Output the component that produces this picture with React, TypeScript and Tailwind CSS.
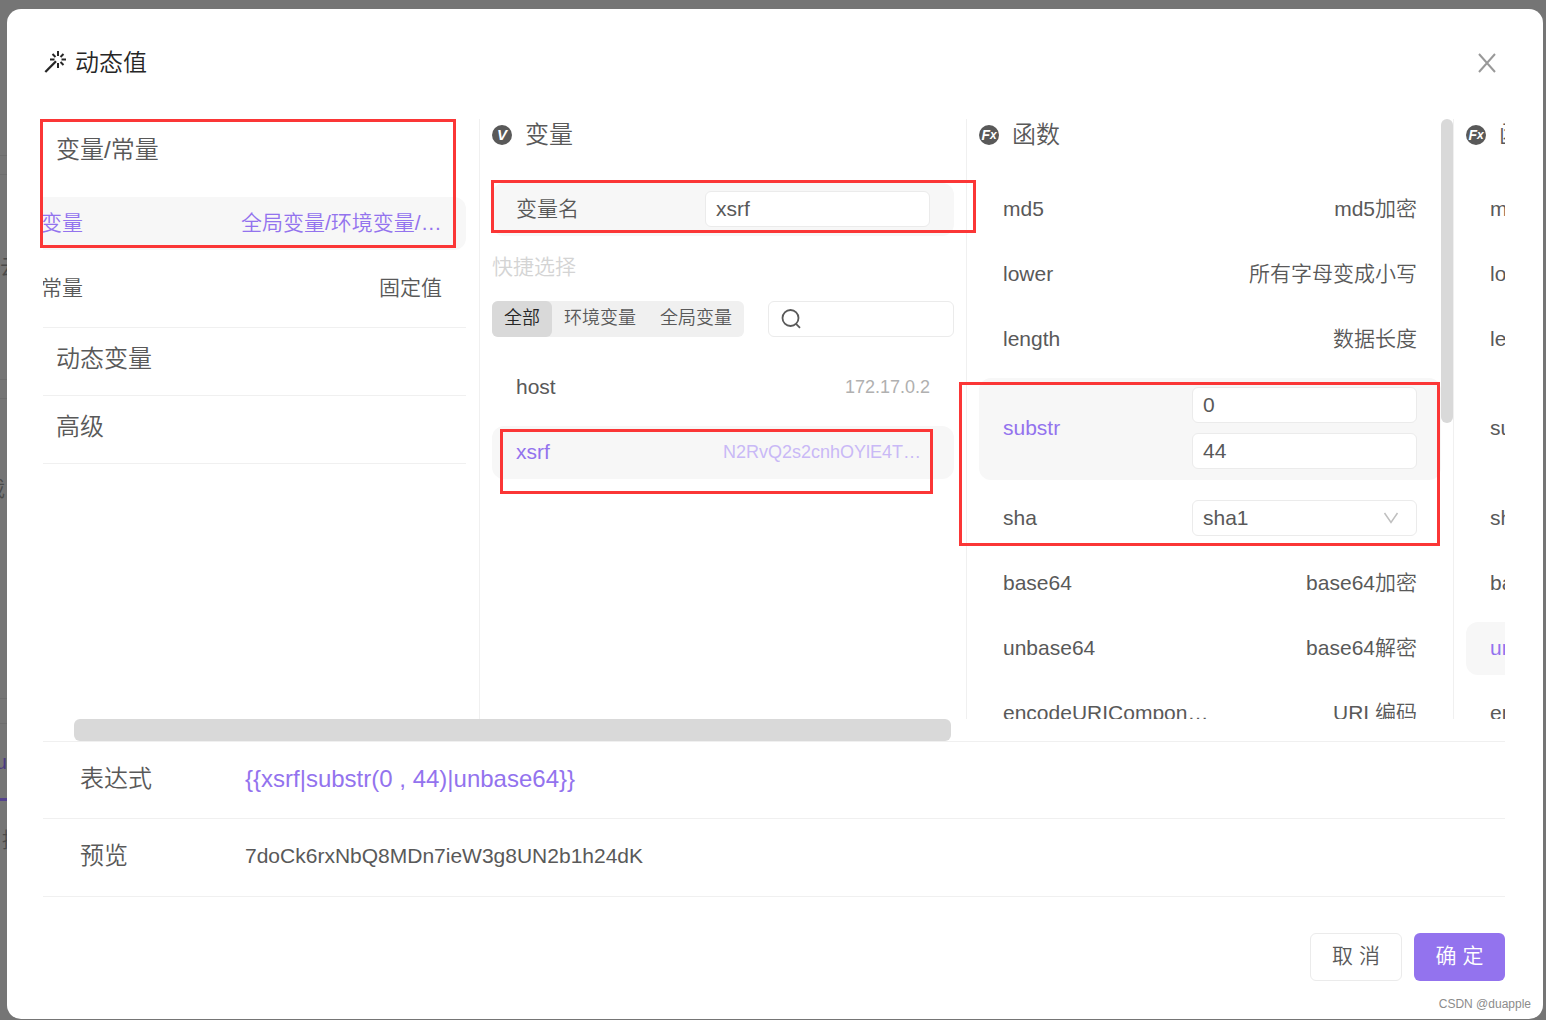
import { useState } from "react";
import clsx from "clsx";

interface Fn {
    name: string;
    desc?: string;
    args?: string[];
    options?: string[];
}

const functions: Fn[] = [
    { name: "md5", desc: "md5加密" },
    { name: "lower", desc: "所有字母变成小写" },
    { name: "length", desc: "数据长度" },
    { name: "substr", args: ["0", "44"] },
    { name: "sha", options: ["sha1", "sha256", "sha512"] },
    { name: "base64", desc: "base64加密" },
    { name: "unbase64", desc: "base64解密" },
    { name: "encodeURIComponent", desc: "URI 编码" },
];

const scopes = ["全部", "环境变量", "全局变量"];

const variables = [
    { name: "host", value: "172.17.0.2" },
    { name: "xsrf", value: "N2RvQ2s2cnhOYlE4TURuN2llVzNnOFVOMmIxaDI0ZEs=" },
];

const field =
    "h-9 w-[225px] shrink-0 rounded-md border border-[#ebebeb] bg-white px-[10px] text-[21px] text-[#595959] outline-none";

function WandIcon() {
    return (
        <svg viewBox="0 0 24 24" className="size-6 text-[#262626]" fill="none" stroke="currentColor" strokeWidth="2">
            <path d="M2.300 21 13 10.300" strokeWidth="2.300" />
            <path d="M15 0v5M15 12v5M7 8.500h4.500M18.500 8.500H23M9.500 3l3 3M20.500 3l-3 3M20.500 14l-3-3" />
        </svg>
    );
}

function CloseIcon() {
    return (
        <svg viewBox="0 0 20 20" className="size-5" fill="none" stroke="currentColor" strokeWidth="2">
            <path d="M2 1 18 19M18 1 2 19" />
        </svg>
    );
}

function Badge({ text }: { text: string }) {
    return (
        <span className="flex size-5 items-center justify-center rounded-full bg-[#595959] font-bold text-white italic">
            <span className={clsx("leading-5", text === "V" ? "text-[15px]" : "text-[14px]")}>{text[0]}</span>
            {text[1] && <span className="text-[12px] leading-5">{text[1]}</span>}
        </span>
    );
}

function ColumnTitle({ badge, children }: { badge: string; children: string }) {
    return (
        <div className="flex h-8 items-center gap-[13px]">
            <Badge text={badge} />
            <h2 className="whitespace-nowrap text-[24px] leading-8">{children}</h2>
        </div>
    );
}

function FunctionColumn({ active }: { active: string }) {
    return (
        <section className="h-[600px] w-[487px] shrink-0 overflow-hidden border-r border-[#f0f0f0] px-3">
            <ColumnTitle badge="Fx">函数</ColumnTitle>
            <ul className="mt-8 flex flex-col gap-3">
                {functions.map((fn) => (
                    <li
                        key={fn.name}
                        className={clsx(
                            "flex items-center justify-between gap-4 rounded-xl px-6 pb-0.5",
                            fn.args ? "h-[102px]" : "h-[53px]",
                            fn.name === active && "bg-[#f7f7f7] text-[#9373ee]"
                        )}
                    >
                        <span className="w-52 truncate">{fn.name}</span>
                        {fn.desc && <span className="whitespace-nowrap">{fn.desc}</span>}
                        {fn.args && (
                            <div className="flex flex-col gap-[10px]">
                                {fn.args.map((arg, i) => (
                                    <input key={i} aria-label={`${fn.name} ${i + 1}`} defaultValue={arg} className={field} />
                                ))}
                            </div>
                        )}
                        {fn.options && (
                            <div className="relative">
                                <select aria-label={fn.name} className={clsx(field, "appearance-none")}>
                                    {fn.options.map((o) => (
                                        <option key={o}>{o}</option>
                                    ))}
                                </select>
                                <svg
                                    viewBox="0 0 16 12"
                                    className="pointer-events-none absolute top-3 right-[18px] h-3 w-4 text-[#bfbfbf]"
                                    fill="none"
                                    stroke="currentColor"
                                    strokeWidth="1.5"
                                >
                                    <path d="M1.500 1 8 10.500 14.500 1" />
                                </svg>
                            </div>
                        )}
                    </li>
                ))}
            </ul>
        </section>
    );
}

// sliver of the page that stays visible next to the dialog
function PageBehind() {
    return (
        <div aria-hidden="true" className="absolute inset-y-0 left-0 w-[7px] overflow-hidden text-[#4a4a4a]">
            <div className="mt-[155px] h-5 border-y border-[#6d6d6d]" />
            <div className="mt-[76px] flex h-8 items-center leading-8">
                <span className="shrink-0">云</span>
            </div>
            <div className="mt-24 h-5 border-y border-[#6d6d6d]" />
            <div className="mt-[74px] flex h-8 items-center justify-end pr-0.5 leading-8">
                <span className="shrink-0">载</span>
            </div>
            <div className="mt-[193px] h-[26px] border-y border-[#6d6d6d]" />
            <div className="mt-[22px] flex h-8 items-center justify-end text-[#4b3a82]">au</div>
            <div className="mt-5 h-[3px] bg-[#54428c]" />
            <div className="mt-[23px] flex h-8 items-center pl-0.5">接</div>
        </div>
    );
}

export default function App() {
    const [scope, setScope] = useState("全部");
    const [name, setName] = useState("xsrf");

    return (
        <div className="relative min-h-screen overflow-hidden bg-[#757575] pt-[9px] pr-[3px] pb-px pl-[7px] font-['Liberation_Sans','Noto_Sans_CJK_SC',sans-serif] text-[21px] font-[350] text-[#595959]">
            <PageBehind />
            <div role="dialog" aria-labelledby="dialog-title" className="relative flex min-h-[1010px] flex-col rounded-[14px] bg-white px-9 pb-[38px] pr-[38px]">
                <header className="flex h-[110px] items-center justify-between pr-2 pb-0.5">
                    <div className="flex items-center gap-2 text-[#262626]">
                        <WandIcon />
                        <h1 id="dialog-title" className="text-[24px] leading-8 font-[350]">动态值</h1>
                    </div>
                    <button aria-label="关闭" className="text-[#999]">
                        <CloseIcon />
                    </button>
                </header>

                <div className="relative flex h-[600px] overflow-hidden">
                    <section className="w-[437px] shrink-0 overflow-hidden border-r border-[#f0f0f0] pr-[13px]">
                        <div className="border-b border-[#f0f0f0] pb-3">
                            <h2 className="flex h-[78px] items-center px-[13px] pb-4 text-[24px]">变量/常量</h2>
                            <ul className="-ml-[26px] flex flex-col gap-3">
                                <li className="flex h-[53px] items-center justify-between rounded-xl bg-[#f7f7f7] px-6 pb-0.5 text-[#9373ee]">
                                    <span>变量</span>
                                    <span className="w-[201px] truncate">全局变量/环境变量/动态值</span>
                                </li>
                                <li className="flex h-[53px] items-center justify-between px-6 pb-0.5">
                                    <span>常量</span>
                                    <span>固定值</span>
                                </li>
                            </ul>
                        </div>
                        {["动态变量", "高级"].map((item) => (
                            <h2 key={item} className="flex h-[68px] items-center border-b border-[#f0f0f0] px-[13px] pb-1.5 text-[24px]">
                                {item}
                            </h2>
                        ))}
                    </section>

                    <section className="w-[487px] shrink-0 border-r border-[#f0f0f0] px-3">
                        <ColumnTitle badge="V">变量</ColumnTitle>
                        <div className="mt-8 flex h-[53px] items-center justify-between rounded-xl bg-[#f7f7f7] px-6 pb-0.5">
                            <label htmlFor="var-name">变量名</label>
                            <input id="var-name" value={name} onChange={(e) => setName(e.target.value)} className={field} />
                        </div>
                        <p className="mt-[15px] leading-8 text-[#d4d4d4]">快捷选择</p>
                        <div className="mt-[18px] flex gap-6">
                            <div className="flex h-9 shrink-0 rounded-md bg-[#f0f0f0] text-[18px]">
                                {scopes.map((s) => (
                                    <button
                                        key={s}
                                        onClick={() => setScope(s)}
                                        className={clsx("rounded-md px-3 pb-0.5", s === scope && "bg-[#d9d9d9] text-[#262626]")}
                                    >
                                        {s}
                                    </button>
                                ))}
                            </div>
                            <label className="flex h-9 min-w-0 flex-1 items-center rounded-md border border-[#ebebeb] px-3">
                                <svg viewBox="0 0 20 20" className="size-5 shrink-0" fill="none" stroke="currentColor" strokeWidth="1.8">
                                    <circle cx="9.500" cy="9" r="8" />
                                    <path d="m15 14.800 4 4" />
                                </svg>
                                <input aria-label="搜索" className="w-full min-w-0 pl-2 outline-none" />
                            </label>
                        </div>
                        <ul className="mt-6 flex flex-col gap-3">
                            {variables.map((v) => (
                                <li
                                    key={v.name}
                                    className={clsx(
                                        "flex h-[53px] items-center justify-between rounded-xl px-6 pb-0.5",
                                        v.name === name && "bg-[#f7f7f7] text-[#9373ee]"
                                    )}
                                >
                                    <span>{v.name}</span>
                                    <span className={clsx("max-w-[207px] truncate pt-0.5 text-[18px]", v.name === name ? "text-[#c9b9f6]" : "text-[#b0b0b0]")}>
                                        {v.value}
                                    </span>
                                </li>
                            ))}
                        </ul>
                    </section>

                    <FunctionColumn active="substr" />
                    <FunctionColumn active="unbase64" />
                    <div className="absolute top-0 left-[1398px] h-[304px] w-3 rounded-full bg-[#d9d9d9]" />
                </div>
                <div className="ml-[31px] h-[22px] w-[60%] rounded-md bg-[#d9d9d9]" />

                <dl className="border-t border-[#f0f0f0]">
                    <div className="flex h-[77px] items-center border-b border-[#f0f0f0] px-[37px] pb-0.5">
                        <dt className="w-[165px] text-[24px]">表达式</dt>
                        <dd className="text-[24px] text-[#9373ee]">{"{{xsrf|substr(0 , 44)|unbase64}}"}</dd>
                    </div>
                    <div className="flex h-[78px] items-center border-b border-[#f0f0f0] px-[37px] pb-1">
                        <dt className="w-[165px] text-[24px]">预览</dt>
                        <dd>7doCk6rxNbQ8MDn7ieW3g8UN2b1h24dK</dd>
                    </div>
                </dl>

                <footer className="mt-9 flex justify-end gap-3">
                    <button className="h-12 w-[92px] rounded-md border border-[#ebebeb] bg-white pb-0.5">取 消</button>
                    <button className="h-12 w-[91px] rounded-md bg-[#9373ee] pb-0.5 text-white">确 定</button>
                </footer>
                <span className="absolute right-3 bottom-[7px] text-[12px] leading-4 text-[#8c8c8c]">CSDN @duapple</span>
            </div>

            {/* highlight boxes */}
            <div className="pointer-events-none absolute top-[119px] left-[40px] h-[129px] w-[416px] border-3 border-[#fb3636]" />
            <div className="pointer-events-none absolute top-[180px] left-[491px] h-[53px] w-[485px] border-3 border-[#fb3636]" />
            <div className="pointer-events-none absolute top-[429px] left-[500px] h-[65px] w-[433px] border-3 border-[#fb3636]" />
            <div className="pointer-events-none absolute top-[382px] left-[959px] h-[164px] w-[481px] border-3 border-[#fb3636]" />
        </div>
    );
}
